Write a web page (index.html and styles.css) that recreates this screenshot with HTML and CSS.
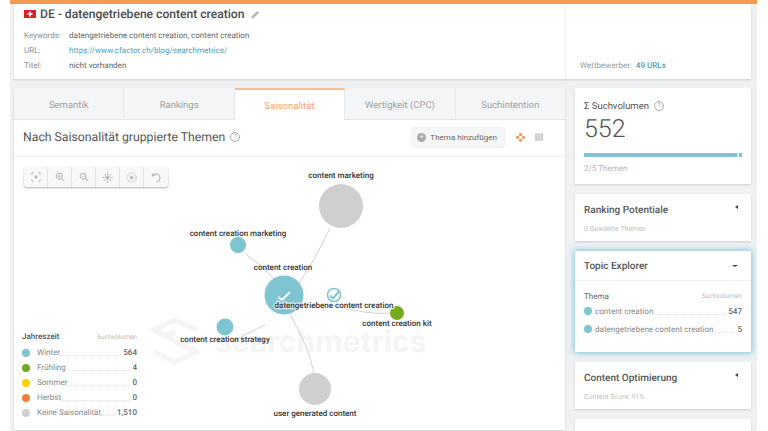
FILE: index.html
```html
<!DOCTYPE html>
<html lang="de">
<head>
<meta charset="utf-8">
<title>Searchmetrics</title>
<link rel="stylesheet" href="styles.css">
</head>
<body>
<div class="app">
  <header class="head card">
    <div class="head-main">
      <h1 class="title">
        <svg class="flag" viewBox="0 0 12 8" width="12" height="8"><rect width="12" height="8" fill="#d8232a"/><path d="M5.2 1.5h1.6v1.700h1.700v1.600H6.800v1.700H5.200V4.800H3.500V3.200h1.700z" fill="#fff"/></svg>
        <span>DE - datengetriebene content creation</span>
        <svg class="pen" viewBox="0 0 10 10" width="9" height="9"><path d="M0.500 9.500 1 7 7 1l2 2-6 6z" fill="#b5b5b5"/></svg>
      </h1>
      <dl class="meta">
        <dt>Keywords:</dt><dd>datengetriebene content creation, content creation</dd>
        <dt>URL:</dt><dd><a href="#">https://www.cfactor.ch/blog/searchmetrics/</a></dd>
        <dt>Titel:</dt><dd>nicht vorhanden</dd>
      </dl>
    </div>
    <div class="head-side"><span class="muted">Wettbewerber:</span><a href="#" class="urls">49 URLs</a></div>
  </header>

  <div class="columns">
    <main class="panel">
      <nav class="tabs">
        <a class="tab">Semantik</a>
        <a class="tab">Rankings</a>
        <a class="tab active">Saisonalität</a>
        <a class="tab">Wertigkeit (CPC)</a>
        <a class="tab">Suchintention</a>
      </nav>
      <div class="panel-head">
        <h2 class="panel-title">Nach Saisonalität gruppierte Themen <span class="help">?</span></h2>
        <div class="panel-actions">
          <button class="add"><span class="add-dot">+</span>Thema hinzufügen</button>
          <svg class="view" viewBox="0 0 10 10" width="9" height="9"><path d="M5 2 2 5l3 3 3-3z" fill="none" stroke="#f4914d" stroke-width=".6"/><g fill="#f4914d"><circle cx="5" cy="1.600" r="1.600"/><circle cx="1.600" cy="5" r="1.600"/><circle cx="8.400" cy="5" r="1.600"/><circle cx="5" cy="8.400" r="1.600"/></g></svg>
          <svg class="view" viewBox="0 0 10 9" width="8" height="8"><rect width="10" height="9" fill="#c4c6c8"/><path d="M0 3h10M0 6h10M3.300 0v9M6.600 0v9" stroke="#eee" stroke-width=".7"/></svg>
        </div>
      </div>
      <section class="chart">
        <div class="toolbar">
          <span class="tool"><svg viewBox="0 0 12 12" width="10" height="10" fill="none" stroke="#bbb" stroke-width="1.100"><path d="M1 3.500V1h2.500M8.500 1H11v2.500M11 8.500V11H8.500M3.500 11H1V8.500"/><circle cx="6" cy="6" r="1.500" fill="#bbb"/></svg></span>
          <span class="tool"><svg viewBox="0 0 12 12" width="10" height="10" fill="none" stroke="#bbb" stroke-width="1.300"><circle cx="5" cy="5" r="3.500"/><path d="M7.500 7.500 11 11M3.500 5h3M5 3.500v3"/></svg></span>
          <span class="tool"><svg viewBox="0 0 12 12" width="10" height="10" fill="none" stroke="#bbb" stroke-width="1.300"><circle cx="5" cy="5" r="3.500"/><path d="M7.500 7.500 11 11M3.500 5h3"/></svg></span>
          <span class="tool"><svg viewBox="0 0 12 12" width="11" height="11" fill="none" stroke="#bbb" stroke-width="1"><circle cx="6" cy="6" r="1.800" fill="#bbb"/><path d="M6 0v3.500M6 8.500V12M0 6h3.500M8.500 6H12M2 2l2 2M10 2 8 4M2 10l2-2M10 10 8 8"/></svg></span>
          <span class="tool"><svg viewBox="0 0 12 12" width="11" height="11" fill="none" stroke="#bbb" stroke-width="1"><circle cx="6" cy="6" r="5" stroke-dasharray="2.500 1"/><circle cx="6" cy="6" r="1.500" fill="#bbb"/></svg></span>
          <span class="tool"><svg viewBox="0 0 12 12" width="11" height="11" fill="none" stroke="#bbb" stroke-width="1.300"><path d="M2.500 3A4.500 4.500 0 1 1 6 11"/><path d="M0.800 1 1.200 5 5 4" fill="#bbb" stroke="none"/></svg></span>
        </div>

        <svg class="graph" viewBox="0 0 551 274" width="551" height="274">
          <g class="mark">
            <path class="mark-line" d="M183 173 161 163 140 173 182 195 161 205 140 195"/>
            <path class="mark-line" d="M161 175 150 180M172 190 161 185"/>
            <text x="201" y="195" class="mark-text">searchmetrics</text>
          </g>
          <g class="edges">
            <path d="M316 71Q300 105 283 129"/>
            <path d="M232 97Q250 110 262 124"/>
            <path d="M251 168Q230 178 218 185"/>
            <path d="M276 157Q295 190 300 216"/>
            <path d="M320 149Q355 158 378 156"/>
          </g>
          <circle cx="327" cy="49" r="22" fill="#cfcfcf"/>
          <circle cx="224" cy="88" r="8" fill="#7fc4d1"/>
          <circle cx="270" cy="138" r="19.500" fill="#7fc4d1"/>
          <path d="M264 140l4 3 8-8" fill="none" stroke="#fff" stroke-width="1.800"/>
          <circle cx="320" cy="138" r="6.500" fill="#fff" stroke="#7fc4d1" stroke-width="1.500"/>
          <path d="M316 138.500l3 3 6-7" fill="none" stroke="#7fc4d1" stroke-width="2"/>
          <circle cx="383" cy="156" r="7" fill="#74ab1c"/>
          <circle cx="211" cy="170" r="8.500" fill="#7fc4d1"/>
          <circle cx="301" cy="232" r="16" fill="#cfcfcf"/>
          <g class="labels">
            <text x="327" y="21">content marketing</text>
            <text x="224" y="79">content creation marketing</text>
            <text x="269" y="113">content creation</text>
            <text x="320" y="151" class="halo">datengetriebene content creation</text>
            <text x="320" y="151">datengetriebene content creation</text>
            <text x="383" y="169">content creation kit</text>
            <text x="211" y="185">content creation strategy</text>
            <text x="301" y="259">user generated content</text>
          </g>
        </svg>

        <div class="legend">
          <div class="legend-head"><strong>Jahreszeit</strong><span>Suchvolumen</span></div>
          <div class="row"><i class="dot winter"></i><span class="name">Winter</span><span class="fill"></span><b>564</b></div>
          <div class="row"><i class="dot spring"></i><span class="name">Frühling</span><span class="fill"></span><b>4</b></div>
          <div class="row"><i class="dot summer"></i><span class="name">Sommer</span><span class="fill"></span><b>0</b></div>
          <div class="row"><i class="dot autumn"></i><span class="name">Herbst</span><span class="fill"></span><b>0</b></div>
          <div class="row"><i class="dot none"></i><span class="name">Keine Saisonalität</span><span class="fill"></span><b>1,510</b></div>
        </div>
      </section>
    </main>

    <aside class="side">
      <section class="card box volume">
        <h3 class="vol-title">Σ Suchvolumen <span class="help">?</span></h3>
        <div class="vol-num">552</div>
        <div class="bar"><span class="bar-fill"></span></div>
        <div class="small">2/5 Themen</div>
      </section>
      <section class="card box fold">
        <div class="fold-head"><h3>Ranking Potentiale</h3><i class="arrow-left"></i></div>
        <div class="tiny">0 Gewählte Themen</div>
      </section>
      <section class="card explorer">
        <div class="fold-head ex-head"><h3>Topic Explorer</h3><i class="arrow-down"></i></div>
        <div class="ex-body">
          <div class="ex-top"><span>Thema</span><span class="ex-vol">Suchvolumen</span></div>
          <div class="row ex-row"><i class="dot winter"></i><span class="name">content creation</span><span class="fill"></span><b>547</b></div>
          <div class="row ex-row"><i class="dot winter"></i><span class="name">datengetriebene content creation</span><span class="fill"></span><b>5</b></div>
        </div>
      </section>
      <section class="card box fold">
        <div class="fold-head"><h3>Content Optimierung</h3><i class="arrow-left"></i></div>
        <div class="tiny">Content Score: 91%</div>
      </section>
      <section class="card box stub"></section>
    </aside>
  </div>
</div>
</body>
</html>
```

FILE: styles.css
```css
* { box-sizing: border-box; }
html, body { margin: 0; height: 100%; overflow: hidden; background: #fff; }
body { font-family: Roboto, "Liberation Sans", sans-serif; color: #555; padding-left: 10px; text-rendering: geometricPrecision; }
.app { width: 747px; height: 431px; background: #eff1f3; border-top: 4px solid #f89a53; padding: 0 6px 0 4px; overflow: hidden; }
.card { background: #fff; box-shadow: 0 1px 2px rgba(0,0,0,.14); }
a { color: #4a9fba; text-decoration: none; }

.head { display: flex; height: 75px; }
.head-main { flex: 1; padding: 2px 0 0 10px; }
.title { margin: 0; display: flex; align-items: center; gap: 4px; font-size: 12.100px; font-weight: 500; color: #4c4c4c; height: 16px; line-height: 16px; }
.pen { margin-left: 3px; }
.flag { flex: none; }
.meta { margin: 6px 0 0; display: grid; grid-template-columns: 45px 1fr; font-size: 8.050px; line-height: 15px; }
.meta dt { color: #8e8e8e; }
.meta dd { margin: 0; color: #666; }
.head-side { width: 186px; border-left: 1px dotted #e3e3e3; padding: 0 0 6px 14px; display: flex; align-items: flex-end; gap: 4px; font-size: 8.050px; line-height: 15px; }
.muted { color: #9a9a9a; }
.urls { font-weight: 500; }

.columns { display: flex; gap: 10px; margin-top: 9px; align-items: flex-start; }
.panel { width: 551px; height: 342px; background: #fff; box-shadow: 0 1px 2px rgba(0,0,0,.14); flex: none; }
.tabs { display: flex; height: 32px; background: #f4f5f6; }
.tab { flex: 1; display: flex; align-items: center; justify-content: center; padding-top: 3px; font-size: 9.500px; color: #a0a0a0; border-right: 1px solid #e6e7e9; border-bottom: 1px solid #e6e7e9; }
.tab:last-child { border-right: 0; }
.tab.active { background: #fff; color: #f7a66c; border-top: 2px solid #f8c095; border-bottom: 0; padding-top: 2px; }
.panel-head { height: 37px; display: flex; align-items: center; justify-content: space-between; padding: 0 22px 2px 9px; border-bottom: 1px solid #f2f2f2; }
.panel-title { margin: 0; font-size: 12.250px; font-weight: 400; color: #555; display: flex; align-items: center; gap: 5px; }
.help { width: 10px; height: 10px; border: 1px solid #aaa; border-radius: 50%; font-size: 6px; line-height: 8px; text-align: center; color: #999; font-weight: 400; display: inline-block; }
.panel-actions { display: flex; align-items: center; gap: 10px; }
.add { height: 19px; padding: 0 7px 0 5px; display: flex; align-items: center; gap: 4px; font: 400 8.050px Roboto, sans-serif; color: #666; background: #f5f6f7; border: 0; border-radius: 2px; box-shadow: 0 0 2px rgba(0,0,0,.2); margin-right: 2px; }
.add-dot { width: 9px; height: 9px; border-radius: 50%; background: #aaa; color: #fff; font-size: 7px; line-height: 9px; text-align: center; }

.chart { position: relative; height: 273px; }
.graph { position: absolute; left: 0; top: 0; }
.edges path { fill: none; stroke: #d2d2d2; stroke-width: 1; }
.mark-line { fill: none; stroke: #f5f5f5; stroke-width: 5px; }
.mark-text { font-family: Inter, Roboto, sans-serif; font-size: 30px; font-weight: 700; fill: #f5f5f5; }
.labels text { font-size: 8px; font-weight: 500; fill: #333; text-anchor: middle; }
.labels .halo { stroke: #fff; stroke-width: 2.500px; opacity: .7; }

.toolbar { position: absolute; left: 10px; top: 10px; display: flex; height: 20px; background: #f8f8f8; border-radius: 2px; box-shadow: 0 1px 2px rgba(0,0,0,.3); }
.tool { width: 24px; display: flex; align-items: center; justify-content: center; border-right: 1px solid #e4e4e4; }
.tool:last-child { border-right: 0; }

.legend { position: absolute; left: 8px; top: 173px; width: 115px; font-size: 8.050px; }
.legend-head { display: flex; justify-content: space-between; align-items: center; height: 13px; margin-bottom: 2px; }
.legend-head strong { font-weight: 500; color: #555; }
.legend-head span { font-size: 6.700px; color: #bbb; }
.row { display: flex; align-items: center; height: 15px; }
.dot { width: 8px; height: 8px; border-radius: 50%; margin-right: 7px; flex: none; }
.winter { background: #7fc4d1; }
.spring { background: #74ab1c; }
.summer { background: #fdd000; }
.autumn { background: #ef8138; }
.none { background: #cfcfcf; }
.name { color: #888; }
.fill { flex: 1; border-bottom: 1px dotted #e2e2e2; margin: 6px 3px 0 0; }
.row b { font-weight: 500; color: #666; }

.side { width: 176px; flex: none; display: flex; flex-direction: column; gap: 10px; }
.box { padding: 0 9px; }
.volume { height: 96px; padding-top: 10px; }
.vol-title { margin: 0; font-size: 9.500px; font-weight: 400; color: #555; display: flex; gap: 5px; align-items: center; height: 16px; }
.vol-num { font-size: 25px; font-weight: 300; color: #555; line-height: 28px; margin-top: 2px; }
.bar { height: 4px; background: #7fc4d1; margin-top: 9px; }
.bar-fill { display: block; width: 2px; height: 4px; margin-left: 153px; background: #d8eef2; }
.small { font-size: 8.050px; color: #b4b4b4; margin-top: 7px; }
.fold { height: 47px; }
.fold-head { display: flex; justify-content: space-between; align-items: center; }
.fold-head h3 { margin: 0; font-size: 10px; font-weight: 500; color: #555; }
.fold .fold-head { height: 30px; padding: 2px 4px 0 0; }
.tiny { font-size: 7px; color: #bbb; margin-top: 1px; }
.arrow-left { width: 0; height: 0; border: 2.500px solid transparent; border-left-width: 0; border-right: 3px solid #444; margin-bottom: 6px; }
.arrow-down { width: 0; height: 0; border: 3px solid transparent; border-top: 2.500px solid #444; border-bottom: 0; margin-bottom: 2px; }
.explorer { height: 101px; box-shadow: 0 0 6px 1px #7fc4d1; }
.ex-head { height: 30px; padding: 2px 13px 0 9px; border-bottom: 1px solid #f0f0f0; }
.ex-body { padding: 9px 9px 0; }
.ex-top { display: flex; justify-content: space-between; font-size: 8.050px; color: #666; height: 12px; align-items: center; }
.ex-vol { font-size: 6.700px; color: #bbb; }
.ex-row { height: 18px; font-size: 8.050px; }
.ex-row .dot { margin-right: 3px; }
.stub { height: 30px; }
```
